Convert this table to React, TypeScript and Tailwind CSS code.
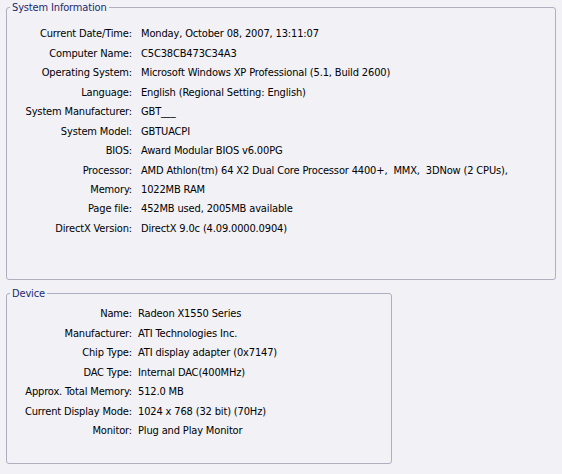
const systemRows: [string, string][] = [
  ["Current Date/Time:", "Monday, October 08, 2007, 13:11:07"],
  ["Computer Name:", "C5C38CB473C34A3"],
  ["Operating System:", "Microsoft Windows XP Professional (5.1, Build 2600)"],
  ["Language:", "English (Regional Setting: English)"],
  ["System Manufacturer:", "GBT___"],
  ["System Model:", "GBTUACPI"],
  ["BIOS:", "Award Modular BIOS v6.00PG"],
  ["Processor:", "AMD Athlon(tm) 64 X2 Dual Core Processor 4400+,  MMX,  3DNow (2 CPUs),"],
  ["Memory:", "1022MB RAM"],
  ["Page file:", "452MB used, 2005MB available"],
  ["DirectX Version:", "DirectX 9.0c (4.09.0000.0904)"],
];

const deviceRows: [string, string][] = [
  ["Name:", "Radeon X1550 Series"],
  ["Manufacturer:", "ATI Technologies Inc."],
  ["Chip Type:", "ATI display adapter (0x7147)"],
  ["DAC Type:", "Internal DAC(400MHz)"],
  ["Approx. Total Memory:", "512.0 MB"],
  ["Current Display Mode:", "1024 x 768 (32 bit) (70Hz)"],
  ["Monitor:", "Plug and Play Monitor"],
];

function GroupBox({
  title,
  rows,
  gap,
  top,
  className,
}: {
  title: string;
  rows: [string, string][];
  gap: string;
  top: string;
  className: string;
}) {
  return (
    <fieldset className={`rounded-[3px] border border-[#aeb0c0] ${className}`}>
      <legend className="ml-[3px] px-[2px] leading-[13px] text-[#1c2a6e]">{title}</legend>
      <div className={`flex flex-col ${top}`}>
        {rows.map(([label, value]) => (
          <div key={label} className="flex h-[19.45px] items-center whitespace-pre">
            <span className="w-[125px] text-right">{label}</span>
            <span className={gap}>{value}</span>
          </div>
        ))}
      </div>
    </fieldset>
  );
}

export default function App() {
  return (
    <div
      className="flex h-[474px] w-[562px] flex-col bg-[#f1f1f6] px-[6px] pt-[1px] text-[11px] tracking-[-0.15px] text-black"
      style={{ fontFamily: '"DejaVu Sans Condensed", "Liberation Sans", sans-serif' }}
    >
      <GroupBox title="System Information" rows={systemRows} gap="pl-[9px]" top="mt-[11px]" className="h-[279px] w-[550px]" />
      <GroupBox title="Device" rows={deviceRows} gap="pl-[6px]" top="mt-[5px]" className="mt-[7px] h-[177px] w-[386px]" />
    </div>
  );
}
